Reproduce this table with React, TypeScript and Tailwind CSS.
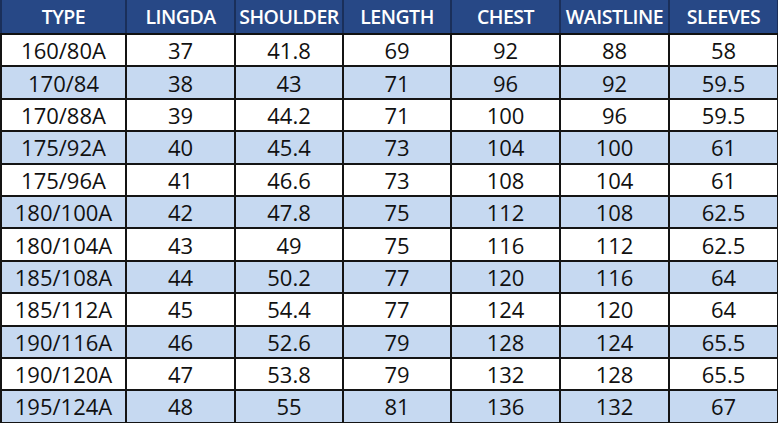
const HEAD = ["TYPE", "LINGDA", "SHOULDER", "LENGTH", "CHEST", "WAISTLINE", "SLEEVES"];

const ROWS: string[][] = [
  ["160/80A", "37", "41.8", "69", "92", "88", "58"],
  ["170/84", "38", "43", "71", "96", "92", "59.5"],
  ["170/88A", "39", "44.2", "71", "100", "96", "59.5"],
  ["175/92A", "40", "45.4", "73", "104", "100", "61"],
  ["175/96A", "41", "46.6", "73", "108", "104", "61"],
  ["180/100A", "42", "47.8", "75", "112", "108", "62.5"],
  ["180/104A", "43", "49", "75", "116", "112", "62.5"],
  ["185/108A", "44", "50.2", "77", "120", "116", "64"],
  ["185/112A", "45", "54.4", "77", "124", "120", "64"],
  ["190/116A", "46", "52.6", "79", "128", "124", "65.5"],
  ["190/120A", "47", "53.8", "79", "132", "128", "65.5"],
  ["195/124A", "48", "55", "81", "136", "132", "67"],
];

const COLS = ["w-[125px]", "w-[109px]", "w-[108px]", "w-[108px]", "w-[109px]", "w-[109px]", "w-[109px]"];

export default function App() {
  return (
    <div className="h-[423px] w-[778px] overflow-hidden bg-white font-['Open_Sans','Noto_Sans',sans-serif]">
      <table className="w-[778px] table-fixed border-collapse">
        <colgroup>
          {COLS.map((c, i) => (
            <col key={i} className={c} />
          ))}
        </colgroup>
        <thead>
          <tr className="h-[34px] bg-[#274886]">
            {HEAD.map((h) => (
              <th
                key={h}
                className="border-x-2 border-b-2 border-x-[#1a2f5a] border-b-[#111] p-0 text-center text-[19.5px] leading-none font-semibold tracking-tight text-white"
              >
                {h}
              </th>
            ))}
          </tr>
        </thead>
        <tbody>
          {ROWS.map((r, i) => (
            <tr key={r[0]} className={`h-[32.4px] ${i % 2 ? "bg-[#c6d9f1]" : "bg-white"}`}>
              {r.map((v, j) => (
                <td key={j} className="border-2 border-[#141414] p-0 text-center text-[22px] leading-none text-[#111]">
                  {v}
                </td>
              ))}
            </tr>
          ))}
        </tbody>
      </table>
    </div>
  );
}
